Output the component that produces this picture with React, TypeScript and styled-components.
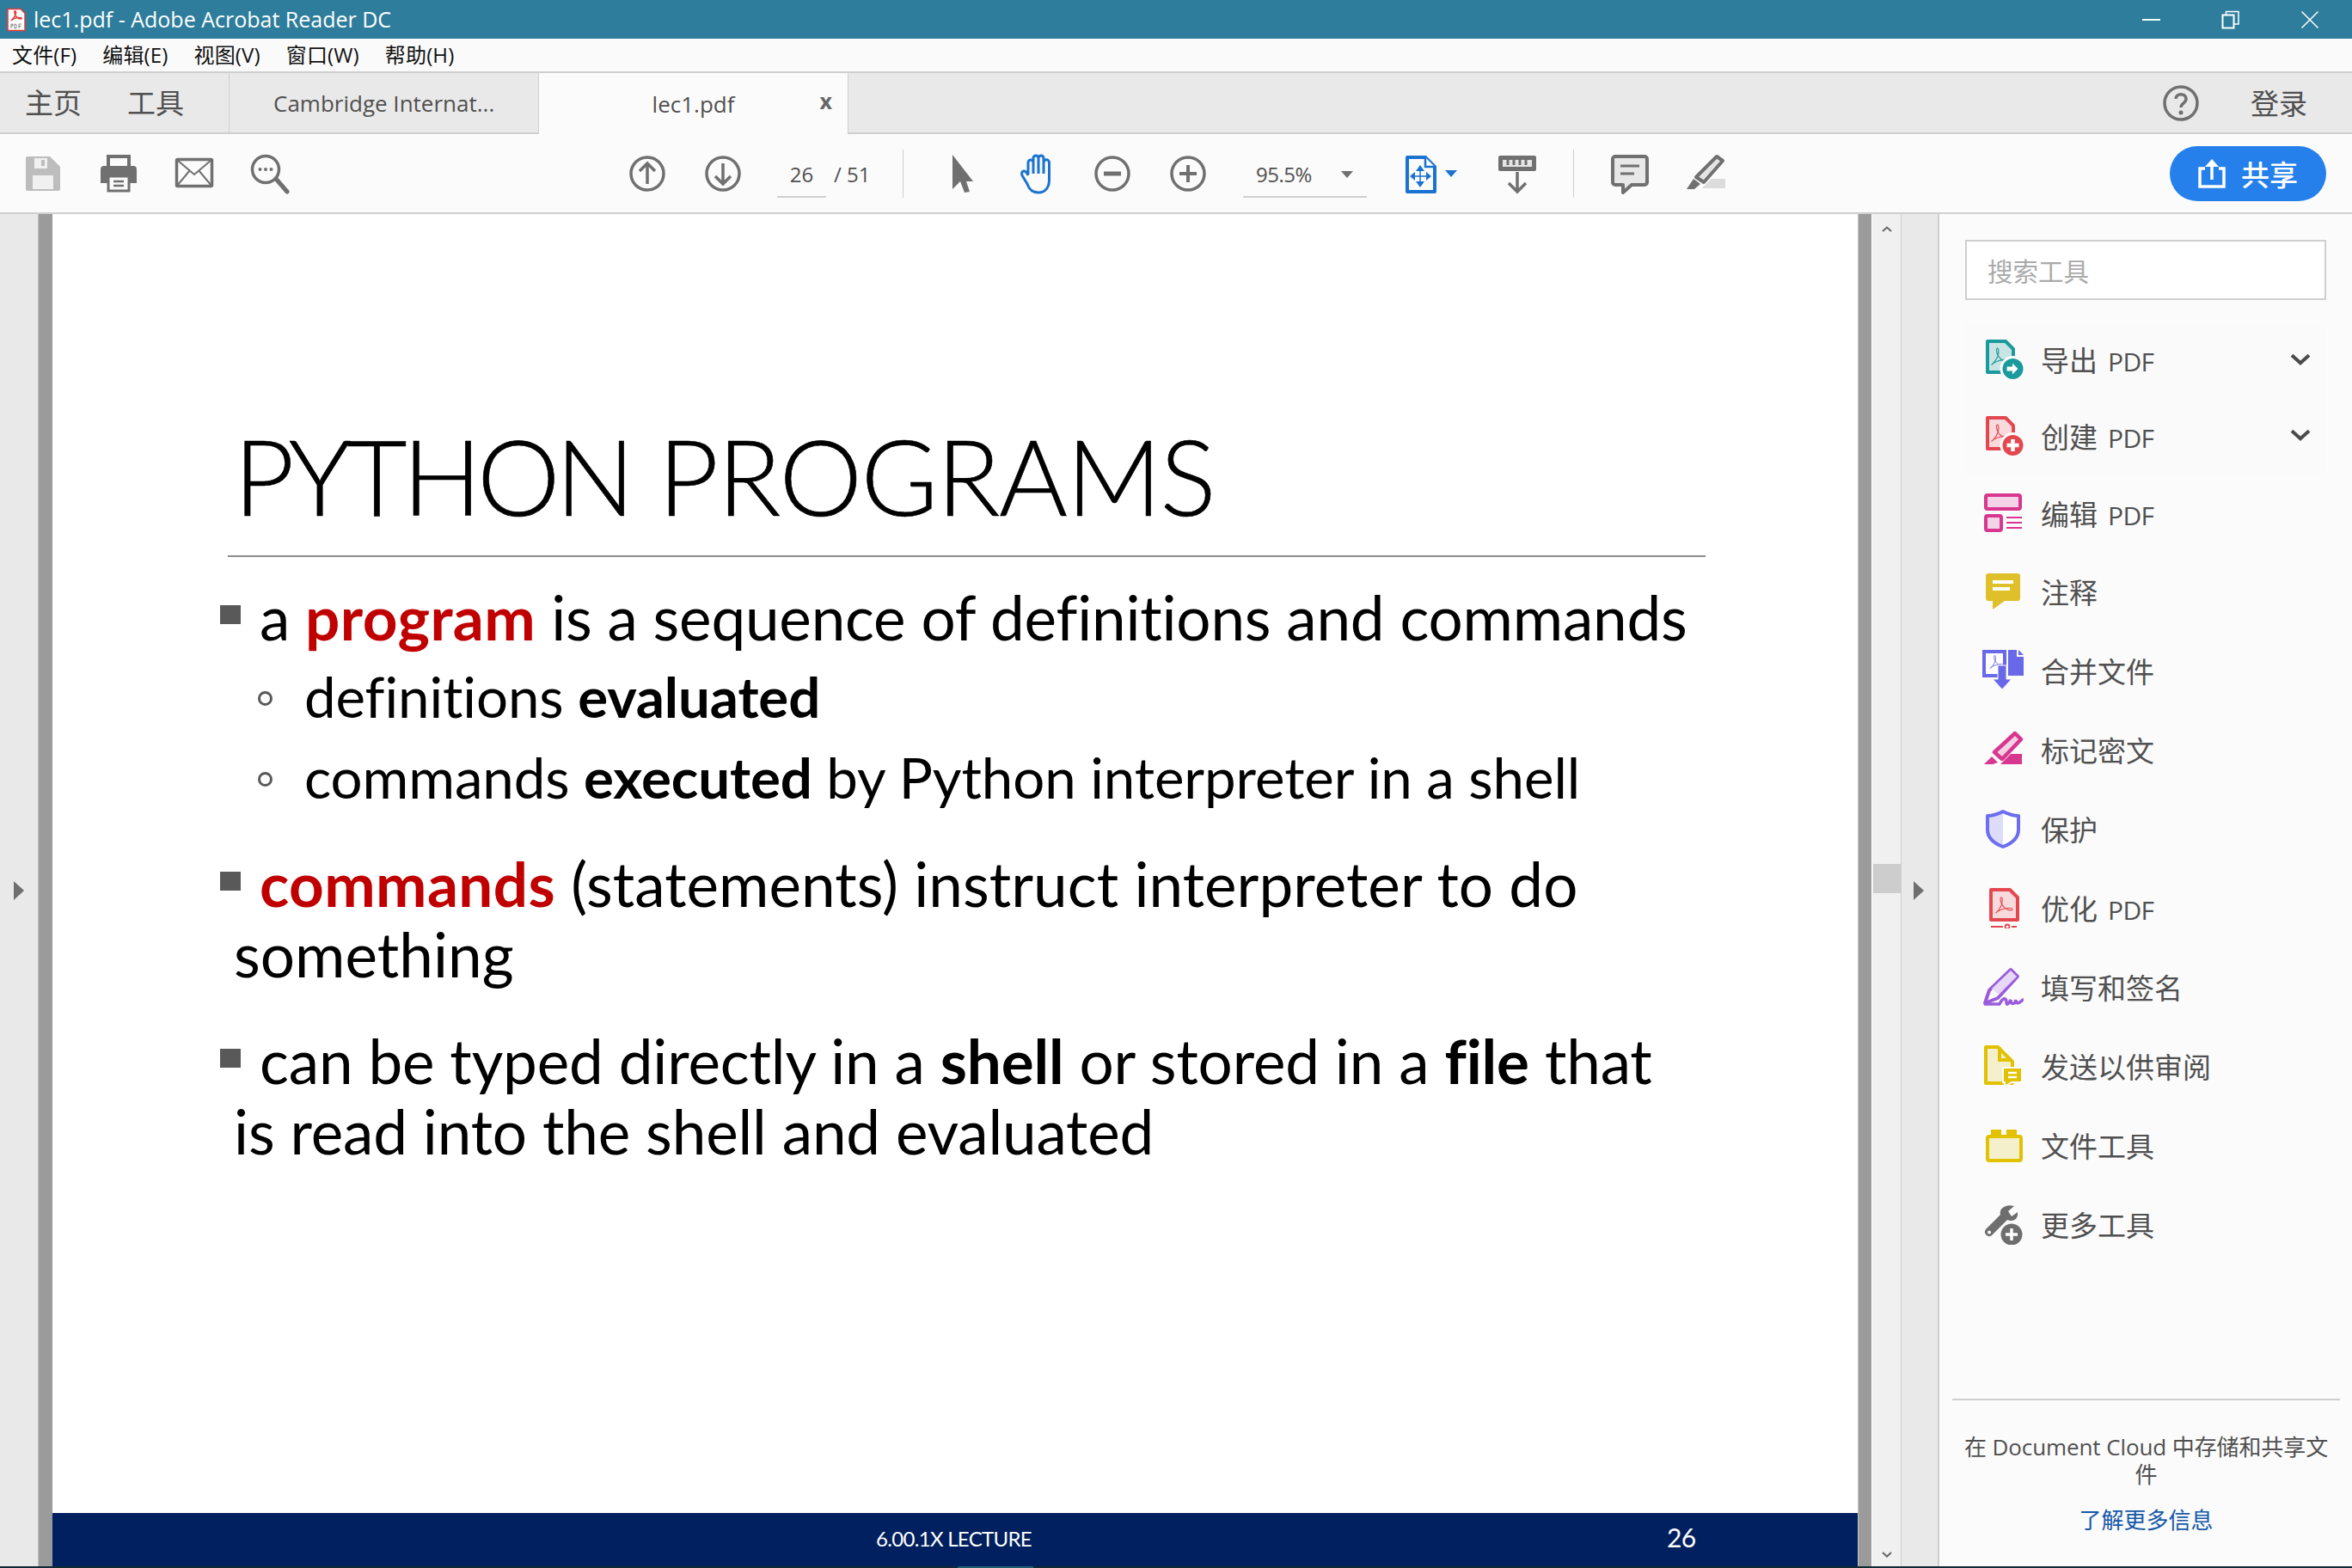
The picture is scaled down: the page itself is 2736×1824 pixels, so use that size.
import React from "react";
import styled, { createGlobalStyle } from "styled-components";

const UI = `"Open Sans", "Noto Sans CJK SC", sans-serif`;
const SLIDE = `"Lato", "Noto Sans", sans-serif`;

const Global = createGlobalStyle`
  html, body { margin: 0; padding: 0; background: #fbfbfb; }
  * { box-sizing: border-box; }
`;

const Root = styled.div`
  width: 2736px; height: 1824px; overflow: hidden;
  display: flex; flex-direction: column;
  font-family: ${UI}; color: #505050;
`;

const TitleBar = styled.div`
  height: 45px; flex: none; background: #2e7d9c; color: #fff;
  display: flex; align-items: center; padding-left: 8px;
`;
const AppTitle = styled.span`
  font-size: 25px; margin-left: 9px; line-height: 45px; white-space: nowrap;
`;
const WindowControls = styled.div`
  margin-left: auto; display: flex; align-items: center; height: 45px; padding-right: 3px;
`;
const WinButton = styled.div`
  width: 92px; height: 45px; display: flex; align-items: center; justify-content: center;
`;

const MenuBar = styled.div`
  height: 40px; flex: none; background: #fafafa; border-bottom: 2px solid #cfcfcf;
  display: flex; align-items: center; gap: 30px; padding-left: 14px;
`;
const MenuItem = styled.span`
  font-size: 24px; line-height: 38px; color: #111; white-space: nowrap; letter-spacing: 0.15px;
`;

const TabBar = styled.div`
  height: 71px; flex: none; background: #e9e9e9; border-bottom: 2px solid #cfcfcf;
  display: flex; align-items: stretch;
`;
const HomeTabs = styled.div`
  width: 267px; display: flex; align-items: center; gap: 53px; padding-left: 29px;
  border-right: 1px solid #cfcfcf; flex: none;
`;
const NavLabel = styled.span`
  font-size: 33px; color: #505050; line-height: 1; white-space: nowrap;
`;
const DocTab = styled.div<{ $active?: boolean }>`
  position: relative; width: 360px; flex: none;
  display: flex; align-items: center; justify-content: ${(p) => (p.$active ? "center" : "flex-start")};
  padding-left: ${(p) => (p.$active ? "0" : "51px")};
  background: ${(p) => (p.$active ? "#fbfbfb" : "transparent")};
  margin-bottom: ${(p) => (p.$active ? "-2px" : "0")};
  border-right: 1px solid #cfcfcf;
  font-size: 26px; color: #505050; white-space: nowrap;
`;
const TabClose = styled.span`
  position: absolute; right: 18px; top: 17px; font-size: 25px; font-weight: 700; color: #666;
  line-height: 30px;
`;
const Account = styled.div`
  margin-left: auto; display: flex; align-items: center; padding-right: 52px;
`;
const SignIn = styled.span`
  font-size: 33px; color: #505050; margin-left: 60px; line-height: 1; padding-top: 2px;
`;

const Toolbar = styled.div`
  height: 93px; flex: none; background: #fbfbfb; border-bottom: 2px solid #cfcfcf;
  display: flex; align-items: center; padding-left: 6px; padding-right: 30px;
`;
const ToolGroup = styled.div<{ $ml: number }>`
  display: flex; align-items: center; margin-left: ${(p) => p.$ml}px; height: 100%;
`;
const ToolButton = styled.div<{ $w?: number }>`
  width: ${(p) => p.$w ?? 88}px; height: 48px; flex: none;
  display: flex; align-items: center; justify-content: center;
`;
const PageField = styled.div`
  width: 57px; height: 50px; margin: 6px 0 0 19px; border-bottom: 2px solid #cfcfcf;
  display: flex; align-items: center; justify-content: center; font-size: 24px; color: #505050; padding-bottom: 2px;
`;
const PageCount = styled.span`
  font-size: 24px; color: #505050; margin-left: 9px; width: 80px; margin-top: 2px; white-space: nowrap;
`;
const Divider = styled.div<{ $ml?: number }>`
  width: 1px; height: 56px; background: #cfcfcf; flex: none; margin-left: ${(p) => p.$ml ?? 0}px;
`;
const ZoomField = styled.div`
  width: 144px; height: 50px; margin-top: 6px; border-bottom: 2px solid #cfcfcf; padding: 0 16px 2px 15px;
  display: flex; align-items: center; justify-content: space-between; font-size: 24px; color: #505050;
  letter-spacing: -0.5px;
`;
const Caret = styled.span<{ $color: string; $ml?: number }>`
  width: 0; height: 0; flex: none; margin-left: ${(p) => p.$ml ?? 0}px;
  border-left: 7px solid transparent; border-right: 7px solid transparent;
  border-top: 8px solid ${(p) => p.$color};
`;
const ShareButton = styled.div`
  margin-left: auto; width: 182px; height: 64px; border-radius: 32px; background: #2680eb; color: #fff;
  display: flex; align-items: center; justify-content: center; gap: 18px; font-size: 33px; font-weight: 500;
`;

const Main = styled.div`
  height: 1573px; flex: none; display: grid; grid-template-columns: 44px 17px 2100px 16px 35px 44px 480px;
`;
const SideGutter = styled.div`
  background: #e9e9e9; display: flex; align-items: center; justify-content: center;
`;
const GutterArrow = styled.span`
  width: 0; height: 0;
  border-top: 11px solid transparent; border-bottom: 11px solid transparent; border-left: 12px solid #6e6e6e;
`;
const PageEdge = styled.div`background: #9b9b9b; border-left: 1px solid #c4c4c4;`;
const Slide = styled.div`
  background: #fff; display: flex; flex-direction: column; color: #000; font-family: ${SLIDE}; overflow: hidden;
`;
const SlideTitle = styled.h1`
  margin: 0; height: 397px; padding: 0 0 32px 211px; display: flex; align-items: flex-end; gap: 0;
  font-family: ${SLIDE}; font-weight: 300; font-size: 122px; line-height: 122px; white-space: pre;
  -webkit-text-stroke: 0.6px #000;
`;
const TitleWord = styled.span<{ $ls: number; $ml?: number }>`
  letter-spacing: ${(p) => p.$ls}px; margin-left: ${(p) => p.$ml ?? 0}px;
`;
const TitleRule = styled.div`
  margin-left: 204px; width: 1719px; height: 2px; background: #8c8c8c; flex: none;
`;
const BulletList = styled.div`
  padding-top: 29px; display: flex; flex-direction: column;
`;
const Para = styled.p<{ $sub?: boolean; $mt?: number; $ls?: number }>`
  margin: ${(p) => p.$mt ?? 0}px 0 0 ${(p) => (p.$sub ? 293 : 211)}px;
  font-size: ${(p) => (p.$sub ? 65.4 : 71)}px; line-height: 82px;
  letter-spacing: ${(p) => p.$ls ?? -0.1}px; white-space: pre;
`;
const Square = styled.span`
  display: inline-block; width: 24px; height: 22px; background: #595959; margin: 0 22px 0 -16px;
  vertical-align: 19px;
`;
const Ring = styled.span`
  display: inline-block; width: 17px; height: 17px; border: 3px solid #595959; border-radius: 50%; margin: 0 37px 0 -54px;
  vertical-align: 14px;
`;
const Keyword = styled.b`color: #c00000; font-weight: 700; letter-spacing: 0.4px;`;
const Strong = styled.b`font-weight: 700;`;
const SlideFooter = styled.div`
  margin-top: auto; height: 62px; background: #00205f; color: #fff; flex: none; position: relative;
  display: flex; align-items: center; justify-content: center; padding: 0 3px 3px 0;
  font-size: 24px; letter-spacing: -0.7px;
`;
const SlideNumber = styled.span`
  position: absolute; left: 1878px; top: 10px; font-size: 30px; line-height: 36px;
`;
const Track = styled.div`
  background: #f0f0f0; border-left: 1px solid #fff; border-right: 1px solid #cfcfcf;
  display: flex; flex-direction: column; align-items: center; justify-content: space-between;
  padding: 14px 0 10px; position: relative;
`;
const Thumb = styled.div`
  position: absolute; left: 1px; right: 0; top: 756px; height: 34px; background: #cdcdcd;
`;
const CollapseStrip = styled.div`
  background: #e9e9e9; border-right: 2px solid #cfcfcf;
  display: flex; align-items: center; justify-content: center; padding-right: 2px;
`;

const ToolsPanel = styled.aside`
  background: #fbfbfb; display: flex; flex-direction: column; padding-top: 30px;
`;
const SearchBox = styled.div`
  margin-left: 30px; width: 420px; height: 70px; border: 2px solid #cfcfcf; background: #fff;
  padding-left: 24px; display: flex; align-items: center; font-size: 29.5px; color: #aaa; flex: none;
`;
const ToolList = styled.div`
  margin-top: 25px; display: flex; flex-direction: column;
`;
const ToolRow = styled.div<{ $h: number; $bg?: boolean }>`
  height: ${(p) => p.$h}px; margin-left: 30px; width: 420px; padding-left: 20px; flex: none;
  display: flex; align-items: center; gap: 20px;
  font-size: 33px; color: #505050; white-space: nowrap;
  background: ${(p) => (p.$bg ? "#fafafa" : "transparent")};
`;
const ToolLabel = styled.span`display: inline-flex; align-items: baseline;`;
const LatinTag = styled.span`font-size: 30px; margin-left: 12px; letter-spacing: -0.6px;`;
const ToolChevron = styled.span`
  margin-left: auto; margin-right: 18px; display: flex;
`;
const PanelFooter = styled.div`
  margin-top: auto; margin-left: 15px; width: 451px; border-top: 2px solid #cfcfcf;
  padding: 38px 0 13px; height: 195px; display: flex; flex-direction: column; align-items: center;
  font-size: 26px; line-height: 32px; color: #505050; text-align: center;
`;
const FooterText = styled.div`width: 430px; letter-spacing: -0.1px;`;
const LearnMore = styled.a`
  color: #1558a8; margin-top: 21px; font-size: 26px; line-height: 32px;
`;
const Taskbar = styled.div`
  height: 2px; flex: none; background: #0f2a35; padding-left: 1114px;
`;
const TaskbarChunk = styled.div`width: 88px; height: 2px; background: #1f5e70;`;

const Glyph = ({ c, x = 0, y = 0, s = 1 }: { c: string; x?: number; y?: number; s?: number }) => (
  <path
    transform={`translate(${x} ${y}) scale(${s})`}
    d="M3 25 C9 20 13 12 12 6 C11.500 2 9 3 9.500 7 C10 14 17 21 24 21 C27 21 26.500 18 22 18 C15 18 6 21 3 25 Z"
    fill="none" stroke={c} strokeWidth="1.300"
  />
);

const DocShape = ({ c, f }: { c: string; f: string }) => (
  <path d="M6 3 H27 L36 12 V39 H6 Z" fill={f} stroke={c} strokeWidth="4" strokeLinejoin="round" />
);

const Icons: Record<string, React.ReactNode> = {
  export: (
    <svg width="48" height="48" viewBox="0 0 48 48">
      <DocShape c="#1b9a9d" f="#c9e4e4" />
      <Glyph c="#1b9a9d" x={8} y={8} s={0.9} />
      <circle cx="35.500" cy="35" r="15" fill="#fbfbfb" />
      <circle cx="35.500" cy="35" r="12" fill="#1b9a9d" />
      <path d="M27 32 H35 V27 L43 35 L35 43 V38 H27 Z" fill="#fff" transform="translate(7 7) scale(.8)" />
    </svg>
  ),
  create: (
    <svg width="48" height="48" viewBox="0 0 48 48">
      <DocShape c="#e34850" f="#f8dadc" />
      <Glyph c="#e34850" x={8} y={8} s={0.9} />
      <circle cx="35.500" cy="35" r="15" fill="#fbfbfb" />
      <circle cx="35.500" cy="35" r="12" fill="#e34850" />
      <path d="M35.500 28 V42 M28.500 35 H42.500" stroke="#fff" strokeWidth="4.500" />
    </svg>
  ),
  edit: (
    <svg width="48" height="48" viewBox="0 0 48 48">
      <rect x="4" y="3" width="40" height="16" rx="2" fill="#f5d3e6" stroke="#d83790" strokeWidth="4" />
      <rect x="4" y="27" width="18" height="17" rx="2" fill="#f5d3e6" stroke="#d83790" strokeWidth="4" />
      <path d="M28 29 H46 M28 35 H46 M28 41 H46" stroke="#d83790" strokeWidth="2" />
    </svg>
  ),
  comment: (
    <svg width="48" height="48" viewBox="0 0 48 48">
      <path d="M7 3 H41 a3 3 0 0 1 3 3 V32 a3 3 0 0 1 -3 3 H26 L12 45 V35 H7 a3 3 0 0 1 -3 -3 V6 a3 3 0 0 1 3 -3 Z" fill="#dfbf2a" />
      <rect x="12" y="11" width="24" height="4" fill="#fff" />
      <rect x="12" y="19" width="20" height="4" fill="#fff" />
    </svg>
  ),
  merge: (
    <svg width="48" height="48" viewBox="0 0 48 48">
      <path d="M2 2 H26 V30 H2 Z" fill="#fff" stroke="#6868e8" strokeWidth="4" />
      <Glyph c="#6868e8" x={7} y={4} s={0.7} />
      <path d="M30 0 H40 V8 H48 V30 H30 Z" fill="#6868e8" />
      <path d="M42 0 L48 6 H42 Z" fill="#6868e8" />
      <path d="M18 18 H28 V34 H34 L23 46 L12 34 H18 Z" fill="#6868e8" stroke="#fbfbfb" strokeWidth="1" />
    </svg>
  ),
  mark: (
    <svg width="48" height="48" viewBox="0 0 48 48">
      <path d="M38 5 L45 12 L23 35 L14 27 Z" fill="#f5d3e6" stroke="#d83790" strokeWidth="4.500" strokeLinejoin="round" />
      <path d="M11 32 L18 39 L12 41 H2 Z" fill="#d83790" />
      <path d="M33 29 H46 V41 H21 Z" fill="#d83790" />
    </svg>
  ),
  protect: (
    <svg width="48" height="48" viewBox="0 0 48 48">
      <path d="M24 3 C30 7 36 8 42 8 V25 C42 36 32 43 24 46 C16 43 6 36 6 25 V8 C12 8 18 7 24 3 Z" fill="#fff" stroke="none" />
      <path d="M24 3 C18 7 12 8 6 8 V25 C6 36 16 43 24 46 Z" fill="#dcdcf8" />
      <path d="M24 4 C30 7 36 9 42 9 V25 C42 36 32 42 24 45 C16 42 6 36 6 25 V9 C12 9 18 7 24 4 Z" fill="none" stroke="#6d6def" strokeWidth="4" strokeLinejoin="round" />
    </svg>
  ),
  optimize: (
    <svg width="48" height="48" viewBox="0 0 48 48">
      <path d="M10 3 H32 L41 12 V38 H10 Z" fill="#f8dadc" stroke="#e34850" strokeWidth="4" strokeLinejoin="round" />
      <Glyph c="#e34850" x={13} y={9} s={0.85} />
      <path d="M10 46 H24 M34 46 H40" stroke="#e34850" strokeWidth="2" />
      <circle cx="29" cy="46" r="2.500" fill="none" stroke="#e34850" strokeWidth="1.800" />
    </svg>
  ),
  sign: (
    <svg width="48" height="48" viewBox="0 0 48 48">
      <path d="M33 4 L41 12 L18 37 L3 43 L8 28 Z" fill="#fbfbfb" stroke="#9a5cdc" strokeWidth="4" strokeLinejoin="round" />
      <path d="M33 5 L40 12 L19 33 L11 26 Z" fill="#e6d8f6" />
      <path d="M2 44 H20" stroke="#9a5cdc" strokeWidth="3.500" />
      <path d="M20 44 C24 36 28 36 28 42 C28 46 31 44 33 39 C33 45 38 45 39 39 C39 44 42 44 47 39" fill="none" stroke="#9a5cdc" strokeWidth="3.500" strokeLinecap="round" />
    </svg>
  ),
  send: (
    <svg width="48" height="48" viewBox="0 0 48 48">
      <path d="M4 2 H18 L35 19 V44 H4 Z" fill="#f5f0cc" stroke="#e2c100" strokeWidth="4" strokeLinejoin="round" />
      <path d="M20 2 V17 H34" fill="none" stroke="#e2c100" strokeWidth="4" />
      <path d="M24 26 H46 V43 H34 L26 48 V43 H24 Z" fill="#e2c100" stroke="#fbfbfb" strokeWidth="2" />
      <path d="M30 32 H40 M30 37 H40" stroke="#fff" strokeWidth="2.500" />
    </svg>
  ),
  files: (
    <svg width="48" height="48" viewBox="0 0 48 48">
      <rect x="6" y="14" width="39" height="28" rx="2" fill="#f5f0cc" stroke="#e2c100" strokeWidth="4" />
      <rect x="10" y="6" width="12" height="7" fill="#e2c100" />
      <rect x="28" y="6" width="12" height="7" fill="#e2c100" />
    </svg>
  ),
  more: (
    <svg width="48" height="48" viewBox="0 0 48 48">
      <path d="M37 3 L30 9 L34 15 L41 10 C42 18 36 22 29 19 L11 37 A5 5 0 0 1 4 30 L21 13 C19 6 27 0 37 3 Z" fill="#6e6e6e" />
      <circle cx="8" cy="33.500" r="2" fill="#fbfbfb" />
      <circle cx="34" cy="36" r="15" fill="#fbfbfb" />
      <circle cx="34" cy="36" r="12.500" fill="#6e6e6e" />
      <path d="M34 29 V43 M27 36 H41" stroke="#fff" strokeWidth="3.500" />
    </svg>
  ),
};

const Chevron = ({ size = 24, c = "#4b4b4b", up }: { size?: number; c?: string; up?: boolean }) => (
  <svg width={size} height={size * 0.6} viewBox="0 0 24 14">
    <path d={up ? "M2 12 L12 3 L22 12" : "M2 2 L12 11 L22 2"} fill="none" stroke={c} strokeWidth="4" />
  </svg>
);

const G = "#707070";
const Ico = ({ children }: { children: React.ReactNode }) => (
  <svg width="48" height="48" viewBox="0 0 48 48">{children}</svg>
);

const tools = [
  { k: "export", t: "导出", tag: "PDF", h: 88, chev: true },
  { k: "create", t: "创建", tag: "PDF", h: 89, chev: true },
  { k: "edit", t: "编辑", tag: "PDF", h: 91 },
  { k: "comment", t: "注释", h: 92 },
  { k: "merge", t: "合并文件", h: 92 },
  { k: "mark", t: "标记密文", h: 92 },
  { k: "protect", t: "保护", h: 92 },
  { k: "optimize", t: "优化", tag: "PDF", h: 92 },
  { k: "sign", t: "填写和签名", h: 92 },
  { k: "send", t: "发送以供审阅", h: 92 },
  { k: "files", t: "文件工具", h: 92 },
  { k: "more", t: "更多工具", h: 92 },
];

export default function App() {
  return (
    <Root>
      <Global />
      <TitleBar>
        <svg width="22" height="28" viewBox="0 0 22 28">
          <path d="M1 1.500 H16 L21 6.500 V26.500 H1 Z" fill="#fff" stroke="#e23b3b" strokeWidth="1.500" />
          <path d="M5 15 C8 12 11 8 10.500 5 C10 3 8.500 3.500 9 6 C9.500 10 13 13 16 13 C18 13 17 11.500 15 11.500 C11 11.500 7 13 5 15 Z" fill="none" stroke="#e23b3b" strokeWidth="1.600" />
          <path d="M5 24 V19 H7 V21 H5 M9 19 V24 H10.500 L11.500 21.500 L10.500 19 H9 M14 24 V19 H17 M14 21.500 H16.500" fill="none" stroke="#777" strokeWidth=".9" />
        </svg>
        <AppTitle>lec1.pdf - Adobe Acrobat Reader DC</AppTitle>
        <WindowControls>
          <WinButton>
            <svg width="22" height="4"><rect y="1" width="21" height="2" fill="#fff" /></svg>
          </WinButton>
          <WinButton>
            <svg width="22" height="22" viewBox="0 0 22 22">
              <rect x="1.500" y="5.500" width="13" height="15" fill="none" stroke="#fff" strokeWidth="2" />
              <path d="M5.500 5 V1.500 H20 V16 H15" fill="none" stroke="#fff" strokeWidth="1.500" />
            </svg>
          </WinButton>
          <WinButton>
            <svg width="22" height="22" viewBox="0 0 22 22">
              <path d="M1.500 1.500 L20.500 20.500 M20.500 1.500 L1.500 20.500" stroke="#fff" strokeWidth="1.500" />
            </svg>
          </WinButton>
        </WindowControls>
      </TitleBar>

      <MenuBar>
        {["文件(F)", "编辑(E)", "视图(V)", "窗口(W)", "帮助(H)"].map((m) => (
          <MenuItem key={m}>{m}</MenuItem>
        ))}
      </MenuBar>

      <TabBar>
        <HomeTabs>
          <NavLabel>主页</NavLabel>
          <NavLabel>工具</NavLabel>
        </HomeTabs>
        <DocTab>Cambridge Internat...</DocTab>
        <DocTab $active>
          lec1.pdf
          <TabClose>x</TabClose>
        </DocTab>
        <Account>
          <svg width="42" height="42" viewBox="0 0 42 42">
            <circle cx="21" cy="21" r="19" fill="none" stroke={G} strokeWidth="3.500" />
            <path d="M15 16 C15 9 27 9 27 16 C27 21 21 21 21 26" fill="none" stroke={G} strokeWidth="3.500" />
            <circle cx="21" cy="32" r="2.500" fill={G} />
          </svg>
          <SignIn>登录</SignIn>
        </Account>
      </TabBar>

      <Toolbar>
        <ToolButton>
          <Ico>
            <path d="M6 4 H32 L44 16 V42 a2 2 0 0 1 -2 2 H6 a2 2 0 0 1 -2 -2 V6 a2 2 0 0 1 2 -2 Z" fill="#bdbdbd" />
            <rect x="14" y="6" width="15" height="12" fill="#f0f0f0" />
            <rect x="22" y="8" width="4" height="7" fill="#bdbdbd" />
            <rect x="12" y="26" width="24" height="16" fill="#f0f0f0" />
          </Ico>
        </ToolButton>
        <ToolButton $w={87}>
          <Ico>
            <rect x="12" y="4" width="24" height="14" fill="none" stroke={G} strokeWidth="4" />
            <path d="M7 15 H41 a4 4 0 0 1 4 4 V35 H3 V19 a4 4 0 0 1 4 -4 Z" fill={G} />
            <rect x="12" y="27" width="24" height="17" fill="#fbfbfb" stroke={G} strokeWidth="3" />
            <path d="M18 33 H30 M18 38 H30" stroke={G} strokeWidth="2.500" />
          </Ico>
        </ToolButton>
        <ToolButton $w={89}>
          <Ico>
            <rect x="3.500" y="7.500" width="41" height="31" rx="1" fill="none" stroke={G} strokeWidth="3.500" />
            <path d="M4 8 L24 25 L44 8 M4 38 L19 20 M44 38 L29 20" fill="none" stroke={G} strokeWidth="2" />
          </Ico>
        </ToolButton>
        <ToolButton>
          <Ico>
            <circle cx="19" cy="19" r="15.500" fill="none" stroke={G} strokeWidth="3.500" />
            <circle cx="12.500" cy="19" r="2" fill={G} />
            <circle cx="19" cy="19" r="2" fill={G} />
            <circle cx="25.500" cy="19" r="2" fill={G} />
            <path d="M31 30 L44 45" stroke={G} strokeWidth="5" strokeLinecap="round" />
          </Ico>
        </ToolButton>

        <ToolGroup $ml={351}>
          <ToolButton>
            <Ico>
              <circle cx="24" cy="24" r="19" fill="none" stroke={G} strokeWidth="3.500" />
              <path d="M24 36 V13 M15 21 L24 12 L33 21" fill="none" stroke={G} strokeWidth="3.500" />
            </Ico>
          </ToolButton>
          <ToolButton>
            <Ico>
              <circle cx="24" cy="24" r="19" fill="none" stroke={G} strokeWidth="3.500" />
              <path d="M24 12 V35 M15 27 L24 36 L33 27" fill="none" stroke={G} strokeWidth="3.500" />
            </Ico>
          </ToolButton>
          <PageField>26</PageField>
          <PageCount>/ 51</PageCount>
          <Divider />
        </ToolGroup>

        <ToolGroup $ml={24}>
          <ToolButton>
            <Ico>
              <path d="M13 2 L37 33 L29 33 L33 45 L27 46 L22 33 L13 42 Z" fill={G} />
            </Ico>
          </ToolButton>
          <ToolButton $w={87}>
            <Ico>
              <path d="M13 25 V11 a3 3 0 0 1 6 0 V6 a3 3 0 0 1 6 0 V6 a3 3 0 0 1 6 0 V11 a3.200 3.200 0 0 1 6.500 0 V31 C37.500 40 33 46 25 46 C17 46 14 42 12 36 L6 26 C4 21 9 19 12 24 L13 26 M19 11 V24 M25 6 V24 M31 6 V24"
                fill="none" stroke="#1b73d0" strokeWidth="3" strokeLinejoin="round" />
            </Ico>
          </ToolButton>
          <ToolButton>
            <Ico>
              <circle cx="24" cy="24" r="19" fill="none" stroke={G} strokeWidth="3.500" />
              <path d="M14 24 H34" stroke={G} strokeWidth="5" />
            </Ico>
          </ToolButton>
          <ToolButton>
            <Ico>
              <circle cx="24" cy="24" r="19" fill="none" stroke={G} strokeWidth="3.500" />
              <path d="M14 24 H34 M24 14 V34" stroke={G} strokeWidth="4" />
            </Ico>
          </ToolButton>
        </ToolGroup>

        <ToolGroup $ml={20}>
          <ZoomField>
            95.5%
            <Caret $color="#707070" />
          </ZoomField>
        </ToolGroup>

        <ToolGroup $ml={44}>
          <svg width="38" height="48" viewBox="0 0 38 48">
            <path d="M3 5 H24 L35 16 V45 H3 Z" fill="none" stroke="#1b73d0" strokeWidth="4" strokeLinejoin="round" />
            <path d="M24 5 V16 H35" fill="#fbfbfb" stroke="#1b73d0" strokeWidth="2.500" />
            <path d="M18 14 L23 21 H13 Z M18 40 L23 33 H13 Z M6 27 L12 22 V32 Z M31 27 L25 22 V32 Z" fill="#1b73d0" />
            <path d="M18 20 V34 M11 27 H25" stroke="#1b73d0" strokeWidth="1.500" />
          </svg>
          <Caret $color="#1b73d0" $ml={9} />
        </ToolGroup>

        <ToolGroup $ml={26}>
          <ToolButton>
            <Ico>
              <rect x="2" y="3" width="44" height="18" rx="2" fill={G} />
              <rect x="7" y="8" width="34" height="8" fill="#e6e6e6" />
              <path d="M13 8 V14 M20 8 V14 M27 8 V14 M34 8 V14" stroke={G} strokeWidth="3" />
              <path d="M24 22 V44 M14 35 L24 45 L34 35" fill="none" stroke={G} strokeWidth="3.500" />
            </Ico>
          </ToolButton>
          <Divider $ml={21} />
        </ToolGroup>

        <ToolGroup $ml={21}>
          <ToolButton>
            <Ico>
              <path d="M7 4 H41 a3 3 0 0 1 3 3 V34 a3 3 0 0 1 -3 3 H26 L16 46 V37 H7 a3 3 0 0 1 -3 -3 V7 a3 3 0 0 1 3 -3 Z" fill="#e8e8e8" stroke={G} strokeWidth="4" strokeLinejoin="round" />
              <path d="M13 15 H35 M13 24 H29" stroke={G} strokeWidth="3" />
            </Ico>
          </ToolButton>
          <ToolButton $w={86}>
            <Ico>
              <path d="M21 41 L48 41 L48 30 L32 30 Z" fill="#dcdcdc" />
              <path d="M38 4 L45 9 L23 34 L14 28 Z" fill="#e4e4e4" stroke={G} strokeWidth="4" strokeLinejoin="round" />
              <path d="M11 30 L19 36 L12 42 H3 Z" fill={G} />
            </Ico>
          </ToolButton>
        </ToolGroup>

        <ShareButton>
          <svg width="32" height="34" viewBox="0 0 32 34">
            <path d="M8 11 H2 V32 H30 V11 H24" fill="none" stroke="#fff" strokeWidth="3.500" />
            <path d="M16 24 V6" stroke="#fff" strokeWidth="3.500" />
            <path d="M16 0 L24 9 H8 Z" fill="#fff" />
          </svg>
          共享
        </ShareButton>
      </Toolbar>

      <Main>
        <SideGutter><GutterArrow /></SideGutter>
        <PageEdge />
        <Slide>
          <SlideTitle>
            <TitleWord $ls={-5.4}>PYTHON </TitleWord>
            <TitleWord $ls={-1.6} $ml={5}>PROGRAMS</TitleWord>
          </SlideTitle>
          <TitleRule />
          <BulletList>
            <Para $ls={-0.2}><Square />a <Keyword>program</Keyword> is a sequence of definitions and commands</Para>
            <Para $sub $mt={10}><Ring />definitions <Strong>evaluated</Strong></Para>
            <Para $sub $mt={12}><Ring />commands <Strong>executed</Strong> by Python interpreter in a shell</Para>
            <Para $mt={42} $ls={0.05}><Square /><Keyword>commands</Keyword> (statements) instruct interpreter to do{"\n"}something</Para>
            <Para $mt={42} $ls={-0.15}><Square />can be typed directly in a <Strong>shell</Strong> or stored in a <Strong>file</Strong> that{"\n"}is read into the shell and evaluated</Para>
          </BulletList>
          <SlideFooter>
            6.00.1X LECTURE
            <SlideNumber>26</SlideNumber>
          </SlideFooter>
        </Slide>
        <PageEdge />
        <Track>
          <Chevron size={12} c="#666" up />
          <Thumb />
          <Chevron size={12} c="#666" />
        </Track>
        <CollapseStrip><GutterArrow /></CollapseStrip>
        <ToolsPanel>
          <SearchBox>搜索工具</SearchBox>
          <ToolList>
            {tools.map((t) => (
              <ToolRow key={t.k} $h={t.h} $bg={t.chev}>
                {Icons[t.k]}
                <ToolLabel>
                  {t.t}
                  {t.tag && <LatinTag>{t.tag}</LatinTag>}
                </ToolLabel>
                {t.chev && <ToolChevron><Chevron /></ToolChevron>}
              </ToolRow>
            ))}
          </ToolList>
          <PanelFooter>
            <FooterText>在 Document Cloud 中存储和共享文件</FooterText>
            <LearnMore>了解更多信息</LearnMore>
          </PanelFooter>
        </ToolsPanel>
      </Main>
      <Taskbar><TaskbarChunk /></Taskbar>
    </Root>
  );
}
